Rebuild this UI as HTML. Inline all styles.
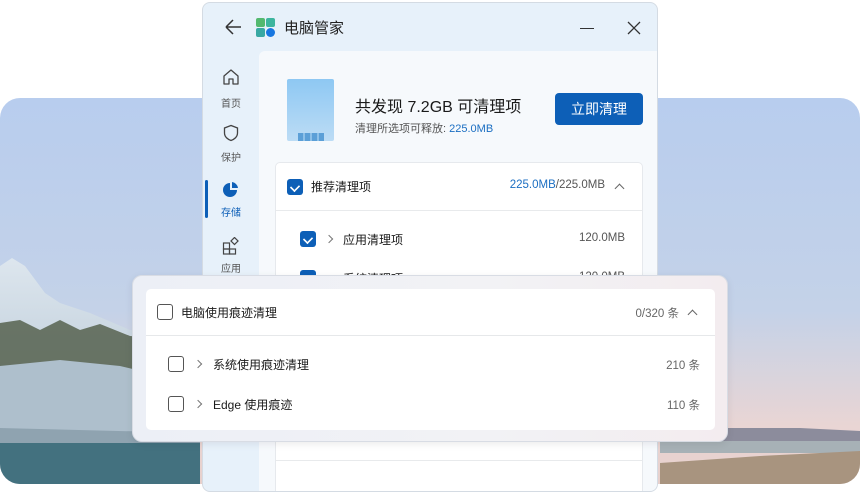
<!DOCTYPE html>
<html><head><meta charset="utf-8"><style>
*{margin:0;padding:0;box-sizing:border-box}
body{width:860px;height:484px;overflow:hidden;background:#fff;position:relative;font-family:"Liberation Sans","Noto Sans CJK SC",sans-serif;color:#1a1a1a}
.abs{position:absolute}
.cb{position:absolute;width:16px;height:16px;border-radius:3px}
.on{background:#0d5fb7}
.on::after{content:"";position:absolute;left:4px;top:3px;width:6px;height:8px;border:solid #fff;border-width:0 2px 2px 0;transform:rotate(45deg) scale(.8)}
.off{border:1.3px solid #555;background:#fff}
.t{position:absolute;white-space:nowrap}
.chev{position:absolute;width:6px;height:6px;border:solid #777;border-width:1.2px 1.2px 0 0;transform:rotate(45deg)}
.up{position:absolute;width:7px;height:7px;border:solid #666;border-width:1.2px 0 0 1.2px;transform:rotate(45deg)}
</style></head><body>
<svg class="abs" style="left:0;top:98px" width="860" height="386">
<defs>
<linearGradient id="sky" x1="0" y1="0" x2="0" y2="1">
<stop offset="0" stop-color="#b8cdee"/><stop offset="0.55" stop-color="#c4d2e8"/><stop offset="0.85" stop-color="#e9d5d4"/><stop offset="1" stop-color="#e7d0cc"/></linearGradient>
<linearGradient id="snow" x1="0" y1="0" x2="0" y2="1"><stop offset="0" stop-color="#dde6ee"/><stop offset="1" stop-color="#a9bccb"/></linearGradient>
<clipPath id="c"><rect width="860" height="386" rx="20"/></clipPath>
</defs>
<g clip-path="url(#c)">
<rect width="860" height="386" fill="url(#sky)"/>
<path d="M0 168 L12 160 L25 168 L45 195 L60 205 L90 215 L130 232 L170 238 L200 245 L200 386 L0 386Z" fill="url(#snow)"/>
<path d="M0 225 L20 222 L40 232 L60 222 L80 232 L100 226 L130 238 L160 240 L200 245 L200 285 L120 270 L60 265 L0 270Z" fill="#56614f" opacity="0.85"/>
<path d="M0 268 L60 262 L120 268 L170 280 L200 290 L200 345 L0 345Z" fill="#aebfcc"/>
<path d="M0 330 L200 335 L200 350 L0 350Z" fill="#8fa3b0"/>
<path d="M0 345 L200 345 L200 386 L0 386Z" fill="#43717f"/>
<path d="M660 333 L720 330 L800 330 L860 333 L860 345 L660 345Z" fill="#8c8c9c"/>
<rect x="660" y="343" width="200" height="12" fill="#a7b1b6"/>
<path d="M660 365 L760 358 L860 353 L860 386 L660 386Z" fill="#a8947f"/>
</g></svg>

<div class="abs" style="left:202px;top:2px;width:456px;height:490px;border-radius:8px;background:#e7f1fa;border:1px solid #d4dbe3;overflow:hidden">
 <div class="abs" style="left:56px;top:48px;width:400px;height:440px;background:#f6f9fc;border-top-left-radius:6px"></div>
 <svg class="abs" style="left:20px;top:14px" width="20" height="20"><path d="M3 10H18M3 10L10 3M3 10L10 17" stroke="#333" stroke-width="1.5" fill="none"/></svg>
 <svg class="abs" style="left:53px;top:15px" width="20" height="20">
  <rect x="0" y="0" width="9" height="9" rx="2" fill="#53b96f"/><rect x="10" y="0" width="9" height="9" rx="2" fill="#3db59e"/><rect x="0" y="10" width="9" height="9" rx="2" fill="#39a8a3"/><circle cx="14.5" cy="14.5" r="4.5" fill="#1877e0"/></svg>
 <div class="t" style="left:81px;top:14px;font-size:15px;color:#222">电脑管家</div>
 <div class="abs" style="left:377px;top:25px;width:14px;height:1.2px;background:#333"></div>
 <svg class="abs" style="left:424px;top:18px" width="14" height="14"><path d="M1 1L13 13M13 1L1 13" stroke="#333" stroke-width="1.3"/></svg>
 <svg class="abs" style="left:19px;top:65px" width="18" height="18"><path d="M2 8L9 2L16 8V16H11V11H7V16H2Z" stroke="#444" stroke-width="1.3" fill="none" stroke-linejoin="round"/></svg>
 <div class="t" style="left:18px;top:92px;font-size:10px;color:#555">首页</div>
 <svg class="abs" style="left:19px;top:121px" width="18" height="18"><path d="M9 1.5L2.5 4V9C2.5 13 6 15.5 9 16.5C12 15.5 15.5 13 15.5 9V4Z" stroke="#444" stroke-width="1.3" fill="none"/></svg>
 <div class="t" style="left:18px;top:146px;font-size:10px;color:#555">保护</div>
 <div class="abs" style="left:2px;top:177px;width:3px;height:38px;border-radius:2px;background:#0d5fb7"></div>
 <svg class="abs" style="left:19px;top:178px" width="18" height="18"><path d="M8 2A7 7 0 1 0 15 9H8Z" fill="#0d5fb7"/><path d="M10 1A7 7 0 0 1 16 7H10Z" fill="#0d5fb7"/></svg>
 <div class="t" style="left:18px;top:201px;font-size:10px;color:#0d5fb7">存储</div>
 <svg class="abs" style="left:19px;top:234px" width="18" height="18"><rect x="1.5" y="6" width="6" height="6" stroke="#444" fill="none" stroke-width="1.2"/><rect x="1.5" y="12" width="6" height="5" stroke="#444" fill="none" stroke-width="1.2"/><rect x="7.5" y="12" width="6" height="5" stroke="#444" fill="none" stroke-width="1.2"/><rect x="10" y="1.5" width="5" height="5" transform="rotate(45 12.5 4)" stroke="#444" fill="none" stroke-width="1.2"/></svg>
 <div class="t" style="left:18px;top:257px;font-size:10px;color:#555">应用</div>
 <div class="abs" style="left:84px;top:76px;width:47px;height:62px;border-radius:2px;background:linear-gradient(#8ec8f3,#bcdcf5)"></div>
 <div class="abs" style="left:95px;top:130px;width:26px;height:8px;background:repeating-linear-gradient(90deg,#5b9fd7 0 5px,#8dc0e8 5px 7px)"></div>
 <div class="t" style="left:152px;top:90px;font-size:16px;color:#1a1a1a">共发现 7.2GB 可清理项</div>
 <div class="t" style="left:152px;top:117px;font-size:11px;color:#555">清理所选项可释放: <span style="color:#1b6ec2">225.0MB</span></div>
 <div class="abs" style="left:352px;top:90px;width:88px;height:32px;border-radius:4px;background:#0d5fb7;color:#fff;font-size:14px;text-align:center;line-height:32px">立即清理</div>
 <div class="abs" style="left:72px;top:159px;width:368px;height:340px;background:#fff;border:1px solid #e6e9ed;border-radius:5px"></div>
 <div class="abs" style="left:73px;top:207px;width:366px;height:1px;background:#e8eaec"></div>
 <div class="abs" style="left:73px;top:457px;width:366px;height:1px;background:#e8eaec"></div>
 <div class="cb on" style="left:84px;top:176px"></div>
 <div class="t" style="left:108px;top:175px;font-size:12px">推荐清理项</div>
 <div class="t" style="right:52px;top:176px;font-size:11.5px;color:#555"><span style="color:#1b6ec2">225.0MB</span>/225.0MB</div>
 <div class="up" style="left:413px;top:182px"></div>
 <div class="cb on" style="left:97px;top:228px"></div>
 <div class="chev" style="left:123px;top:233px"></div>
 <div class="t" style="left:140px;top:228px;font-size:12px">应用清理项</div>
 <div class="t" style="right:32px;top:229px;font-size:11.5px;color:#555">120.0MB</div>
 <div class="cb on" style="left:97px;top:267px"></div>
 <div class="t" style="left:140px;top:267px;font-size:12px">系统清理项</div>
 <div class="t" style="right:32px;top:268px;font-size:11.5px;color:#555">120.0MB</div>
</div>
<div class="abs" style="left:132px;top:275px;width:596px;height:167px;border-radius:10px;background:linear-gradient(90deg,#eceff6,#f2f2f5 60%,#f3ecef);border:1px solid #d8dce4;box-shadow:0 2px 8px rgba(0,0,0,.08)"></div>
<div class="abs" style="left:146px;top:289px;width:569px;height:141px;border-radius:5px;background:#fff"></div>
<div class="abs" style="left:146px;top:335px;width:569px;height:1px;background:#e6e8ea"></div>
<div class="cb off" style="left:157px;top:304px"></div>
<div class="t" style="left:181px;top:304px;font-size:12px">电脑使用痕迹清理</div>
<div class="t" style="right:181px;top:305px;font-size:11.5px;color:#666">0/320 条</div>
<div class="up" style="left:689px;top:311px"></div>
<div class="cb off" style="left:168px;top:356px"></div>
<div class="chev" style="left:195px;top:361px"></div>
<div class="t" style="left:213px;top:356px;font-size:12px">系统使用痕迹清理</div>
<div class="t" style="right:160px;top:357px;font-size:11.5px;color:#666">210 条</div>
<div class="cb off" style="left:168px;top:396px"></div>
<div class="chev" style="left:195px;top:401px"></div>
<div class="t" style="left:213px;top:396px;font-size:12px">Edge 使用痕迹</div>
<div class="t" style="right:160px;top:397px;font-size:11.5px;color:#666">110 条</div>
</body></html>
